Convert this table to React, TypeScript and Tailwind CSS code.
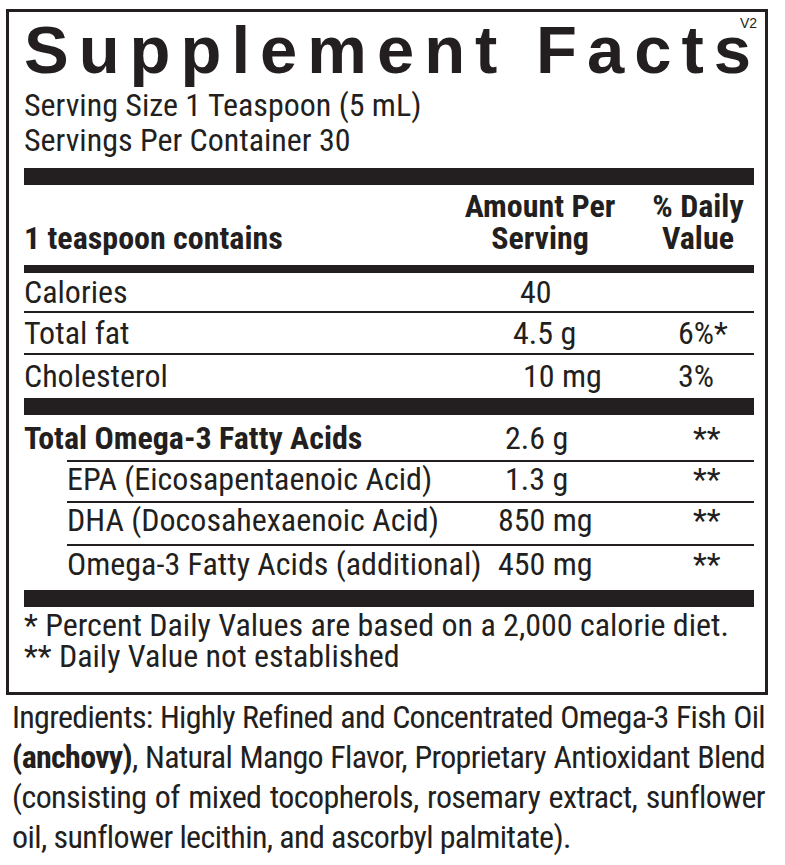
import React from 'react';

// Supplement facts label: bordered panel + ingredients paragraph underneath.

type FactRow = {
  label: string;
  amount: string;
  dv?: string;
  bold?: boolean;
  rowClass: string;
  amountClass: string;
  dvClass?: string;
};

const condensed = "font-['Roboto_Condensed',Roboto,sans-serif] [font-stretch:75%]";

const topRows: FactRow[] = [
  { label: 'Calories', amount: '40', rowClass: 'h-[38px] pt-[3px]', amountClass: 'pl-[60px]' },
  {
    label: 'Total fat',
    amount: '4.5 g',
    dv: '6%*',
    rowClass: 'h-[42px] pt-[4px] border-t-2 border-[#231f20]',
    amountClass: 'pl-[53px]',
    dvClass: 'pl-[36px]',
  },
  {
    label: 'Cholesterol',
    amount: '10 mg',
    dv: '3%',
    rowClass: 'h-[45px] pt-[5px] border-t-2 border-[#231f20]',
    amountClass: 'pl-[63px]',
    dvClass: 'pl-[36px]',
  },
];

const omegaRows: FactRow[] = [
  {
    label: 'EPA (Eicosapentaenoic Acid)',
    amount: '1.3 g',
    dv: '**',
    rowClass: 'h-[41px] pt-[1px] border-t-2 border-[#231f20]',
    amountClass: 'pl-[45px]',
    dvClass: 'pl-[51px]',
  },
  {
    label: 'DHA (Docosahexaenoic Acid)',
    amount: '850 mg',
    dv: '**',
    rowClass: 'h-[43px] pt-[1px] border-t-2 border-[#231f20]',
    amountClass: 'pl-[38px]',
    dvClass: 'pl-[51px]',
  },
  {
    label: 'Omega-3 Fatty Acids (additional)',
    amount: '450 mg',
    dv: '**',
    rowClass: 'h-[46px] pt-[2px] border-t-2 border-[#231f20]',
    amountClass: 'pl-[38px]',
    dvClass: 'pl-[51px]',
  },
];

function Row({ row }: { row: FactRow }) {
  return (
    <div className={`flex leading-[33px] ${row.rowClass}`}>
      <div className={`min-w-0 flex-1 whitespace-nowrap ${row.bold ? 'font-bold' : ''}`}>{row.label}</div>
      <div className={`w-[160px] flex-none whitespace-nowrap ${row.amountClass}`}>{row.amount}</div>
      <div className="w-[22px] flex-none" />
      <div className={`w-[112px] flex-none whitespace-nowrap ${row.dvClass ?? ''}`}>{row.dv}</div>
    </div>
  );
}

export default function App() {
  return (
    <div className={`w-[785px] h-[865px] overflow-hidden bg-white pl-[6px] pt-[9px] text-[#231f20] ${condensed}`}>
      {/* label panel */}
      <div className="relative w-[762px] border-[3px] border-[#231f20] pl-[15px] pr-[11px] pt-[4px] pb-[20px] text-[32px]">
        <span className="absolute right-[8px] top-[4px] font-['Liberation_Sans',sans-serif] text-[14px] leading-[14px] [font-stretch:normal]">
          V2
        </span>
        <h1 className="whitespace-nowrap font-['Liberation_Sans',sans-serif] text-[67px] font-bold leading-[67px] tracking-[10px] [font-stretch:normal]">
          Supplement Facts
        </h1>
        <div className="mt-[5px] leading-[35px]">
          <div>Serving Size 1 Teaspoon (5 mL)</div>
          <div>Servings Per Container 30</div>
        </div>

        <div className="mt-[10px] h-[17px] bg-[#231f20]" />

        {/* column header */}
        <div className="flex items-end pt-[5px] pb-[11px] font-bold leading-[32px]">
          <div className="min-w-0 flex-1 whitespace-nowrap">1 teaspoon contains</div>
          <div className="w-[160px] flex-none text-center whitespace-nowrap">
            Amount Per
            <br />
            Serving
          </div>
          <div className="w-[22px] flex-none" />
          <div className="w-[112px] flex-none text-center whitespace-nowrap">
            % Daily
            <br />
            Value
          </div>
        </div>
        <div className="h-[8px] bg-[#231f20]" />

        {topRows.map((r) => (
          <Row key={r.label} row={r} />
        ))}

        <div className="h-[17px] bg-[#231f20]" />

        <Row
          row={{
            label: 'Total Omega-3 Fatty Acids',
            amount: '2.6 g',
            dv: '**',
            bold: true,
            rowClass: 'h-[45px] pt-[7px]',
            amountClass: 'pl-[45px]',
            dvClass: 'pl-[51px]',
          }}
        />
        <div className="ml-[43px]">
          {omegaRows.map((r) => (
            <Row key={r.label} row={r} />
          ))}
        </div>

        <div className="h-[17px] bg-[#231f20]" />

        <div className="pt-[3px] leading-[31px]">
          <div>* Percent Daily Values are based on a 2,000 calorie diet.</div>
          <div>** Daily Value not established</div>
        </div>
      </div>

      {/* ingredients */}
      <div className="w-[759px] pl-[6px] pt-[2px] text-[32px] leading-[40px]">
        <div className="text-justify tracking-[-0.7px] [text-align-last:justify]">
          Ingredients: Highly Refined and Concentrated Omega-3 Fish Oil
        </div>
        <div className="text-justify tracking-[-0.7px] [text-align-last:justify]">
          <span className="font-bold">(anchovy)</span>, Natural Mango Flavor, Proprietary Antioxidant Blend
        </div>
        <div className="text-justify tracking-[-0.6px] [text-align-last:justify]">
          (consisting of mixed tocopherols, rosemary extract, sunflower
        </div>
        <div className="tracking-[-0.6px]">oil, sunflower lecithin, and ascorbyl palmitate).</div>
      </div>
    </div>
  );
}
